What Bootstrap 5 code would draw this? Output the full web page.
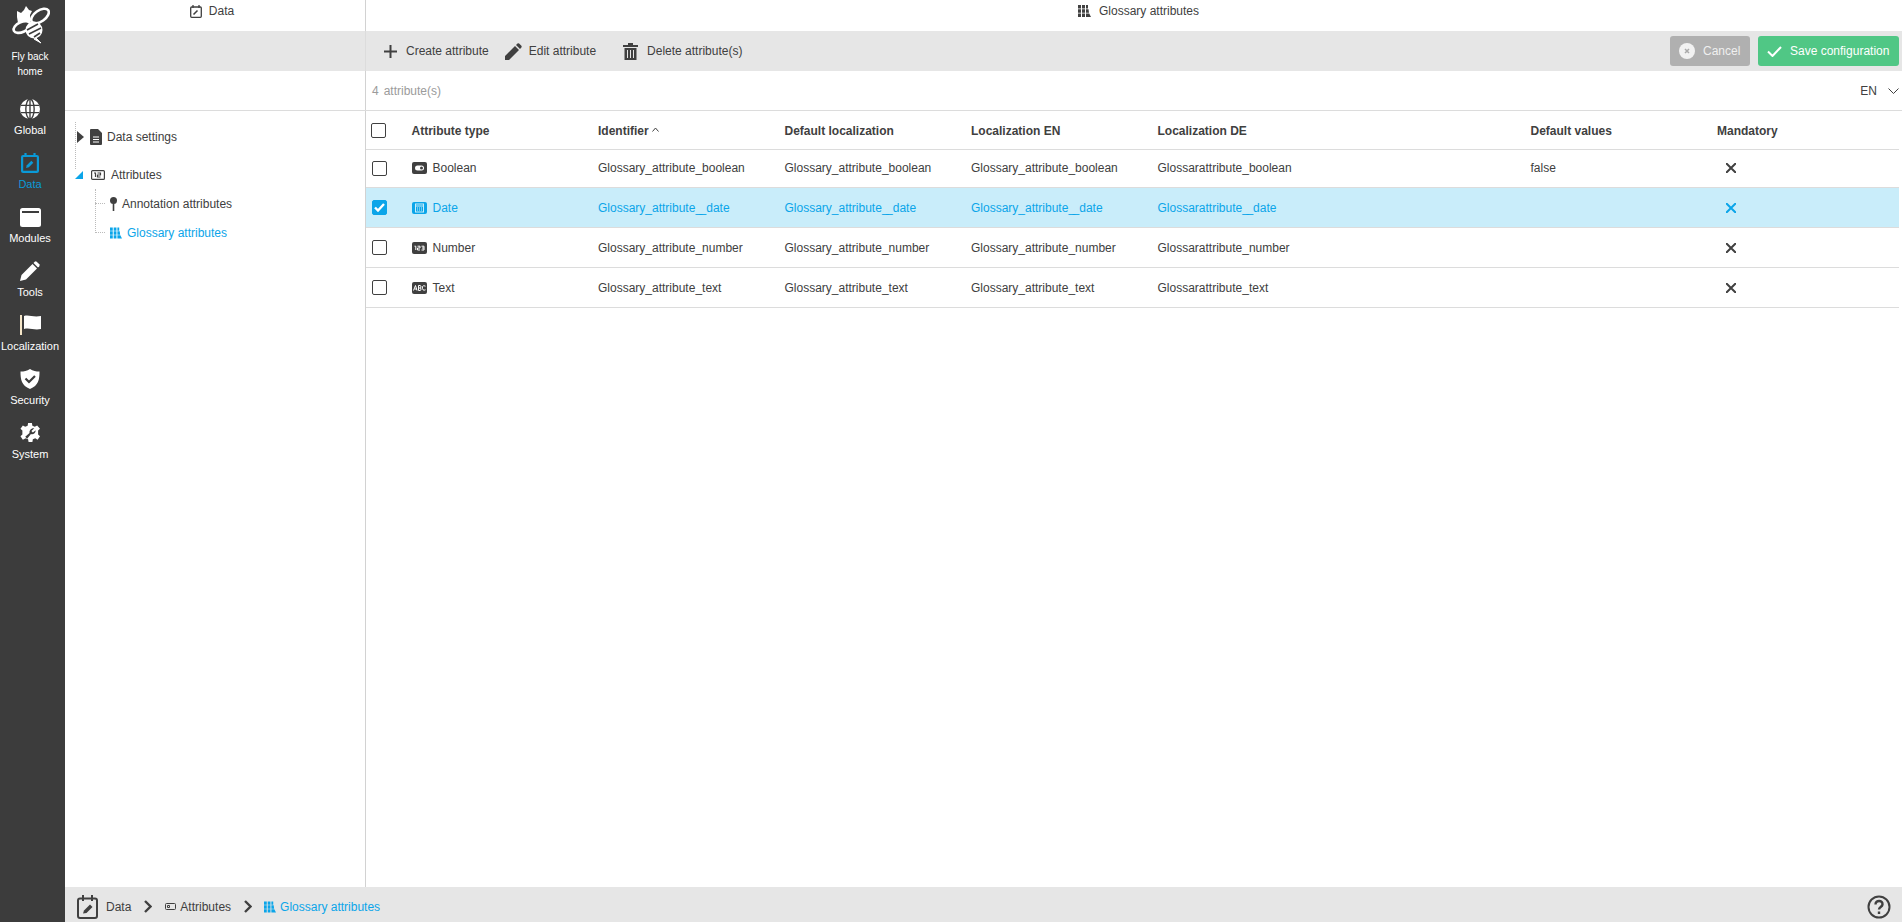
<!DOCTYPE html>
<html lang="en"><head><meta charset="utf-8"><title>Glossary attributes</title>
<link href="https://cdn.jsdelivr.net/npm/bootstrap@5.3.0/dist/css/bootstrap.min.css" rel="stylesheet">
<style>
html,body{height:100%;overflow:hidden}
body{font-family:"Liberation Sans",Arial,sans-serif;font-size:12px;color:#404040;background:#fff}
svg{display:block;flex:none}
.app-shell{height:922px}
.side-rail{width:65px;background:#3c3c3c;color:#fff;flex:none;padding-right:5px}
.rail-logo{height:96px;padding-top:4px;line-height:14.5px;font-size:10px;text-align:center}
.rail-logo-text{margin-top:6px}
.rail-item{height:54px;font-size:11px;line-height:14px;padding-top:3px;gap:4px}
.rail-item.on{color:#0a9ad8}
.main-col{min-width:0}
.head-left{width:301px;flex:none;border-right:1px solid #d2d2d2}
.head-row{height:31px}
.head-a{padding:0 6px 9px 0;gap:7px}
.head-b{padding:0 0 9px 9px;gap:8px}
.tool-row{height:40px;background:#e6e6e6}
.tool-row .head-left{border-right-color:#dcdcdc}
.count-row{height:40px;border-bottom:1px solid #dcdcdc}
.count-text{color:#9b9b9b;padding-left:6px}
.count-num{margin-right:5px}
.tool-btn{padding:0;border:0;background:none;font-size:12px;color:#404040}
.t-create{margin-left:18px;gap:9px}
.t-edit{margin-left:16px;gap:7px}
.t-del{margin-left:27px;gap:9px}
.act-btn{height:30px;border-radius:3px;font-size:12px;color:#fff;border:0;padding:0 9px;white-space:nowrap}
.act-cancel{background:#b0b0b0;width:80px;gap:8px}
.act-save{background:#50c785;width:141px;margin-left:8px;margin-right:3px;gap:8px}
.act-cancel span{color:#efefef}
.lang-pick{margin-right:3px;gap:11px;font-size:12px;color:#404040}
.tree-pane{padding:7px 0 0 10px;position:relative}
.tree-row{display:flex;align-items:center}
.tree-root{height:38px}
.tree-on{color:#0ba5e9}
.tree-guide{position:absolute;left:10px;top:11px;height:47px;border-left:1px dotted #bbb}
.tree-arrow{margin-left:2px}
.tree-doc{margin-left:6px}
.tree-attr{margin-left:8px}
.tree-label-a{margin-left:5px}
.tree-label-b{margin-left:6px}
.tree-sub{margin:-5px 0 0 20px;position:relative}
.tree-subrow{height:29px;display:flex;align-items:center;gap:5px}
.tree-dash{width:10px;border-top:1px dotted #bbb;flex:none}
.tree-vert{position:absolute;left:0;top:0;bottom:14px;border-left:1px dotted #bbb}
.data-table{table-layout:fixed;width:1533px;margin:0;font-size:12px}
.data-table th,.data-table td{padding:0;vertical-align:middle;border-bottom:1px solid #dcdcdc;background:transparent;color:inherit;box-shadow:none;font-weight:400}
.data-table th{font-weight:700;height:38px;padding-top:2px}
.data-table td{height:40px;padding-top:1px}
.data-table tr.row-first td{height:38px;padding-top:0}
.data-table tr{color:#404040}
.data-table tr.row-on{background:#c9edfa;color:#0ba5e9}
.col-check{width:45.500px}
.col-one{width:186.500px}
.col-two{width:373px}
.check-box{width:15px;height:15px;border:1px solid #404040;border-radius:2px;background:#fff;margin-left:5px}
td .check-box{margin-left:6px}
.check-box.on{background:#0ba5e9;border-color:#0ba5e9}
.type-cell{gap:6px}
.tight-us{letter-spacing:-2.500px}
.x-mark{margin-left:9px}
.sort-caret{display:inline-block;vertical-align:3px}
.footer-bar{height:35px;background:#e6e6e6;padding:4px 11px 0 12px;flex:none}
.crumb-on{color:#0ba5e9}
.crumb-data{margin-left:8px}
.crumb-sep{margin:0 13px}
.crumb-sep.last{margin-right:12px}
.crumb-text{margin-left:4px}
.body-split{min-height:0}
.tree-col{width:301px;flex:none;border-right:1px solid #d2d2d2}
</style></head>
<body>
<div class="d-flex app-shell">
<nav class="side-rail d-flex flex-column">
<div class="rail-logo d-flex flex-column align-items-center">
<svg width="40" height="40" viewBox="0 0 40 40" fill="none" stroke="#fff" stroke-width="2.600"><ellipse cx="30" cy="12" rx="10" ry="5.500" transform="rotate(-35 30 12)"/><ellipse cx="12" cy="23" rx="9" ry="5" transform="rotate(-25 12 23)"/><path d="M7 7l4 2 3-3 2-4 3 4 3 1-2 4 0 6-12 2-1-6z" fill="#fff" stroke="none"/><circle cx="24" cy="26" r="8.500" fill="#fff" stroke="none"/><path d="M26 34l5 5-7-4z" fill="#fff" stroke-width="1"/><path d="M17 26l11-6M19 30l12-6M24 33l6-4" stroke="#3c3c3c" stroke-width="1.600"/></svg>
<div class="rail-logo-text">Fly back<br>home</div></div>
<a class="rail-item d-flex flex-column align-items-center text-decoration-none text-white"><svg width="20" height="20" viewBox="0 0 22 22"><circle cx="11" cy="11" r="11" fill="#fff"/><g fill="none" stroke="#3c3c3c" stroke-width="1.500"><ellipse cx="11" cy="11" rx="4.600" ry="11"/><path d="M11 0v22M1 7h20M1 15h20"/></g></svg><span>Global</span></a>
<a class="rail-item on d-flex flex-column align-items-center text-decoration-none"><svg width="18" height="20" viewBox="0 0 18 20" fill="none" stroke="#0a9ad8" stroke-width="2.200"><rect x="1.100" y="3" width="15.800" height="15.900" rx="1"/><path d="M4.500 0v4M13.500 0v4"/><path d="M5 15l.8-2.800 4.500-4.500 2 2-4.500 4.500z" fill="#0a9ad8" stroke="none"/></svg><span>Data</span></a>
<a class="rail-item d-flex flex-column align-items-center text-decoration-none text-white"><svg width="21" height="20" viewBox="0 0 21 20"><rect y="1" width="21" height="19" rx="2.500" fill="#fff"/><rect x="2" y="4" width="17" height="2" fill="#3c3c3c"/></svg><span>Modules</span></a>
<a class="rail-item d-flex flex-column align-items-center text-decoration-none text-white"><svg width="20" height="20" viewBox="0 0 20 20"><path d="M0 20l1.500-6L12.500 3l4.500 4.500L6 18.500z" fill="#fff"/><path d="M13.500 2l1.200-1.300q1-.7 2 0l2.600 2.600q.7 1 0 2L18 6.500z" fill="#fff"/></svg><span>Tools</span></a>
<a class="rail-item d-flex flex-column align-items-center text-decoration-none text-white"><svg width="21" height="20" viewBox="0 0 21 20"><rect width="2" height="20" fill="#f5e6c8"/><path d="M4 1c5-1.500 9 1.500 17 0v13c-7 1.500-11-1.500-17 0z" fill="#fff"/></svg><span>Localization</span></a>
<a class="rail-item d-flex flex-column align-items-center text-decoration-none text-white"><svg width="20" height="20" viewBox="0 0 20 20"><path d="M10 0c3 2 6 2.500 9.500 2.500 0 8-1 14-9.500 17.500C1.500 16.500.5 10.500.5 2.500 4 2.500 7 2 10 0z" fill="#fff"/><path d="M5.500 9.500L9 13l6-6" fill="none" stroke="#3c3c3c" stroke-width="2.200"/></svg><span>Security</span></a>
<a class="rail-item d-flex flex-column align-items-center text-decoration-none text-white"><svg width="20" height="20" viewBox="0 0 21 21"><path d="M8.500 0h4l.5 3 2.500 1 2.500-1.500L21 6l-2 2v4l2 2-2.500 3.500-2.500-1.500-2.500 1-.5 3h-4l-.5-3-2.500-1L3 17.500.5 14l2-2V8l-2-2L3 2.500 5.500 4 8 3z" fill="#fff"/><path d="M15 5.500l-3 3 1.500 1.500 3-2.500c0 3-3 5-5 4l-4 5-2-2 4.500-4c-.5-3 2-5.500 5-5z" fill="#3c3c3c"/></svg><span>System</span></a>
</nav>
<div class="main-col flex-grow-1 d-flex flex-column">
<div class="d-flex head-row">
<div class="head-left head-a d-flex align-items-center justify-content-center"><svg width="12" height="13" viewBox="0 0 12 13" fill="none" stroke="#404040" stroke-width="1.300"><rect x=".7" y="2" width="10.600" height="10.300" rx="1"/><path d="M3 0v3M9 0v3"/><path d="M3.500 9.500l4-4" stroke-width="1.600"/></svg><span>Data</span></div>
<div class="head-b flex-grow-1 d-flex align-items-center justify-content-center"><svg width="13" height="12" viewBox="0 0 13 12" fill="#404040"><path d="M0 0h3v3.600H0zM0 4.200h3v3.600H0zM0 8.400h3V12H0zM4 0h3v3.600H4zM4 4.200h3v3.600H4zM4 8.400h3V12H4zM8 0h2v3.600H8zM8 4.200h2.500l.5 3.600H8zM8 8.400h3.200L13 12H8z"/></svg><span>Glossary attributes</span></div>
</div>
<div class="d-flex tool-row">
<div class="head-left"></div>
<div class="flex-grow-1 d-flex align-items-center">
<button class="tool-btn d-flex align-items-center t-create" type="button"><svg width="13" height="13" viewBox="0 0 13 13" stroke="#404040" stroke-width="2"><path d="M6.500 0v13M0 6.500h13"/></svg>Create attribute</button>
<button class="tool-btn d-flex align-items-center t-edit" type="button"><svg width="17" height="17" viewBox="0 0 17 17" fill="#404040"><path d="M0 17v-4L10 3l4 4L4 17zM11 2l1.500-1.500q.8-.7 1.600 0l2.300 2.300q.6.800 0 1.600L15 6z"/></svg>Edit attribute</button>
<button class="tool-btn d-flex align-items-center t-del" type="button"><svg width="15" height="17" viewBox="0 0 15 17" fill="#404040"><path d="M0 2h5V0h5v2h5v2H0zM1.500 5h12v12h-12z"/><path d="M4.500 7v8M7.500 7v8M10.500 7v8" stroke="#e6e6e6"/></svg>Delete attribute(s)</button>
<div class="ms-auto d-flex align-items-center">
<button class="act-btn act-cancel d-flex align-items-center" type="button"><svg width="16" height="16" viewBox="0 0 16 16"><circle cx="8" cy="8" r="8" fill="#f2f2f2"/><path d="M6 6l4 4M10 6l-4 4" stroke="#aaa" stroke-width="1.500"/></svg><span>Cancel</span></button>
<button class="act-btn act-save d-flex align-items-center" type="button"><svg width="15" height="11" viewBox="0 0 15 11" fill="none" stroke="#fff" stroke-width="2"><path d="M1 5.500l4.500 4.500L14 1"/></svg><span>Save configuration</span></button>
</div></div></div>
<div class="d-flex count-row">
<div class="head-left"></div>
<div class="flex-grow-1 d-flex align-items-center count-text"><span class="count-num">4</span><span>attribute(s)</span>
<div class="ms-auto d-flex align-items-center lang-pick"><span>EN</span><svg width="11" height="6" viewBox="0 0 11 6" fill="none" stroke="#404040"><path d="M.5.500l5 5 5-5"/></svg></div></div>
</div>
<div class="d-flex flex-grow-1 body-split">
<div class="tree-col tree-pane">
<div class="tree-guide"></div>
<div class="tree-row tree-root"><svg class="tree-arrow" width="7" height="12" viewBox="0 0 7 12" fill="#404040"><path d="M0 0l7 6-7 6z"/></svg><svg class="tree-doc" width="12" height="16" viewBox="0 0 12 16" fill="#404040"><path d="M0 1q0-1 1-1h7l4 4v11q0 1-1 1H1q-1 0-1-1z"/><path d="M3 8h6M3 10.500h6M3 13h6" stroke="#fff"/></svg><span class="tree-label-a">Data settings</span></div>
<div class="tree-row tree-root"><svg width="8" height="8" viewBox="0 0 8 8" fill="#0ba5e9"><path d="M8 0v8H0z"/></svg><svg class="tree-attr" width="14" height="10" viewBox="0 0 14 10" fill="none" stroke="#404040" stroke-width="1.200"><rect x=".6" y=".6" width="12.800" height="8.800" rx="1"/><path d="M3 3h1.500v4M6.500 3h3v2h-3v2h3"/></svg><span class="tree-label-b">Attributes</span></div>
<div class="tree-sub">
<div class="tree-vert"></div>
<div class="tree-subrow"><span class="tree-dash"></span><svg width="7" height="14" viewBox="0 0 7 14" fill="#404040"><circle cx="3.500" cy="3.500" r="3.500"/><path d="M2.700 6h1.600v8H2.700z"/></svg><span>Annotation attributes</span></div>
<div class="tree-subrow tree-on"><span class="tree-dash"></span><svg width="12" height="12" viewBox="0 0 13 12" fill="#0ba5e9"><path d="M0 0h3v3.600H0zM0 4.200h3v3.600H0zM0 8.400h3V12H0zM4 0h3v3.600H4zM4 4.200h3v3.600H4zM4 8.400h3V12H4zM8 0h2v3.600H8zM8 4.200h2.500l.5 3.600H8zM8 8.400h3.200L13 12H8z"/></svg><span>Glossary attributes</span></div>
</div>
</div>
<div class="flex-grow-1 overflow-hidden">
<table class="table data-table">
<colgroup><col class="col-check"><col class="col-one"><col class="col-one"><col class="col-one"><col class="col-one"><col class="col-two"><col class="col-one"><col></colgroup>
<thead><tr><th><div class="check-box"></div></th><th>Attribute type</th><th>Identifier <svg class="sort-caret" width="7" height="5" viewBox="0 0 7 5" fill="none" stroke="#404040"><path d="M.5 4.500l3-3.500 3 3.500"/></svg></th><th>Default localization</th><th>Localization EN</th><th>Localization DE</th><th>Default values</th><th>Mandatory</th></tr></thead>
<tbody>
<tr class="row-first"><td><div class="check-box"></div></td><td><div class="d-flex align-items-center type-cell"><svg width="15" height="12" viewBox="0 0 15 12"><rect width="15" height="12" rx="2" fill="#404040"/><rect x="3" y="3.500" width="9" height="5" rx="2.500" fill="#fff"/><circle cx="9.500" cy="6" r="1.500" fill="#404040"/></svg><span>Boolean</span></div></td><td>Glossary_attribute_boolean</td><td>Glossary_attribute_boolean</td><td>Glossary_attribute_boolean</td><td>Glossarattribute_boolean</td><td>false</td><td><svg class="x-mark" width="10" height="10" viewBox="0 0 10 10" stroke="#404040" stroke-width="2"><path d="M0 0l10 10M10 0L0 10"/></svg></td></tr>
<tr class="row-on"><td><div class="check-box on d-flex align-items-center justify-content-center"><svg width="11" height="9" viewBox="0 0 11 9" fill="none" stroke="#fff" stroke-width="2.400"><path d="M1 4.500l3 3L10 1"/></svg></div></td><td><div class="d-flex align-items-center type-cell"><svg width="15" height="12" viewBox="0 0 15 12"><rect width="15" height="12" rx="2" fill="#0ba5e9"/><rect x="3.500" y="2" width="8" height="8" fill="none" stroke="#c9edfa"/><path d="M4 4h7M5 6h1M7 6h1M9 6h1M5 8h1M7 8h1M9 8h1" stroke="#c9edfa"/></svg><span>Date</span></div></td><td>Glossary_attribute<span class="tight-us">_</span>_date</td><td>Glossary_attribute<span class="tight-us">_</span>_date</td><td>Glossary_attribute<span class="tight-us">_</span>_date</td><td>Glossarattribute<span class="tight-us">_</span>_date</td><td></td><td><svg class="x-mark" width="10" height="10" viewBox="0 0 10 10" stroke="#0ba5e9" stroke-width="2"><path d="M0 0l10 10M10 0L0 10"/></svg></td></tr>
<tr><td><div class="check-box"></div></td><td><div class="d-flex align-items-center type-cell"><svg width="15" height="12" viewBox="0 0 15 12"><rect width="15" height="12" rx="2" fill="#404040"/><path d="M2.500 4.200h1.300v3.800M5.500 4.200h2.500v1.800H5.500V8h2.500M9.500 4.200H12v3.800H9.500M10 6h2" fill="none" stroke="#fff"/></svg><span>Number</span></div></td><td>Glossary_attribute_number</td><td>Glossary_attribute_number</td><td>Glossary_attribute_number</td><td>Glossarattribute_number</td><td></td><td><svg class="x-mark" width="10" height="10" viewBox="0 0 10 10" stroke="#404040" stroke-width="2"><path d="M0 0l10 10M10 0L0 10"/></svg></td></tr>
<tr><td><div class="check-box"></div></td><td><div class="d-flex align-items-center type-cell"><svg width="15" height="12" viewBox="0 0 15 12"><rect width="15" height="12" rx="2" fill="#404040"/><path d="M1.500 8.500L3.500 3.500l1.500 5M2.500 7h2.500M6.500 3.500v5h1.500q1 0 1-1.300t-1-1.200H6.500M8 6q1 0 1-1.200t-1-1.300H6.500M13.500 4.200q-2-1.200-3 .3-.5 2 .5 3.300 1 .8 2.500 0" fill="none" stroke="#fff"/></svg><span>Text</span></div></td><td>Glossary_attribute_text</td><td>Glossary_attribute_text</td><td>Glossary_attribute_text</td><td>Glossarattribute_text</td><td></td><td><svg class="x-mark" width="10" height="10" viewBox="0 0 10 10" stroke="#404040" stroke-width="2"><path d="M0 0l10 10M10 0L0 10"/></svg></td></tr>
</tbody></table>
</div></div>
<div class="footer-bar d-flex align-items-center">
<svg width="21" height="24" viewBox="0 0 21 24" fill="none" stroke="#404040" stroke-width="2"><rect x="1" y="3.500" width="19" height="19.500" rx="2"/><path d="M6 0v6M15 0v6"/><path d="M6 18.500l1-3 6-6 2.500 2.500-6 6z" fill="#404040" stroke="none"/></svg>
<span class="crumb-data">Data</span>
<svg class="crumb-sep" width="8" height="13" viewBox="0 0 8 13" fill="none" stroke="#404040" stroke-width="2.400"><path d="M1 1l5.500 5.500L1 12"/></svg>
<svg width="11" height="7" viewBox="0 0 11 7" fill="none" stroke="#404040"><rect x=".5" y=".5" width="10" height="6" rx="1"/><path d="M2.500 2.500h2v2h-2z"/></svg>
<span class="crumb-text">Attributes</span>
<svg class="crumb-sep last" width="8" height="13" viewBox="0 0 8 13" fill="none" stroke="#404040" stroke-width="2.400"><path d="M1 1l5.500 5.500L1 12"/></svg>
<svg width="12" height="12" viewBox="0 0 13 12" fill="#0ba5e9"><path d="M0 0h3v3.600H0zM0 4.200h3v3.600H0zM0 8.400h3V12H0zM4 0h3v3.600H4zM4 4.200h3v3.600H4zM4 8.400h3V12H4zM8 0h2v3.600H8zM8 4.200h2.500l.5 3.600H8zM8 8.400h3.200L13 12H8z"/></svg>
<span class="crumb-on crumb-text">Glossary attributes</span>
<svg class="ms-auto" width="24" height="24" viewBox="0 0 24 24" fill="none" stroke="#404040" stroke-width="2"><circle cx="12" cy="12" r="10.500"/><path d="M8.500 9.500c0-5 7.500-4.500 7 0-.3 2.500-3.500 2.500-3.500 5" stroke-width="2.400"/><path d="M12 16.500v2.500" stroke-width="2.400"/></svg>
</div>
</div>
</div>
<script src="https://cdn.jsdelivr.net/npm/bootstrap@5.3.0/dist/js/bootstrap.bundle.min.js"></script>
</body></html>
